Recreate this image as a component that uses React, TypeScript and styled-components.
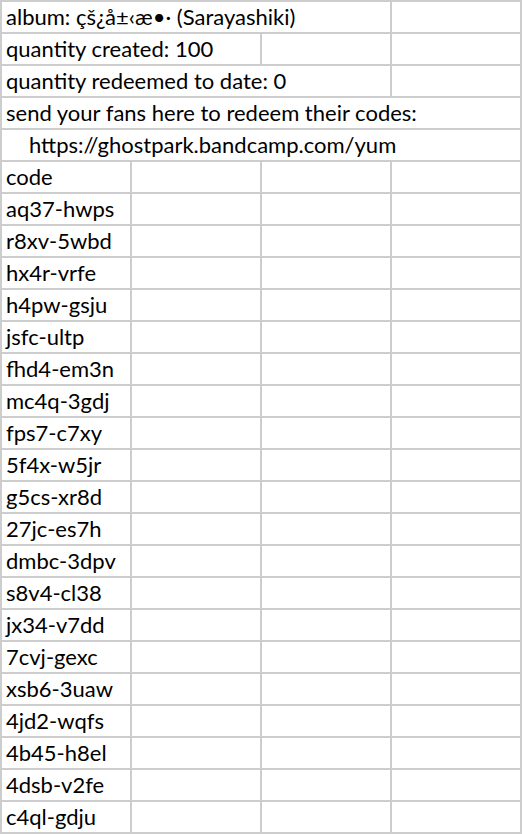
import React from "react";
import styled, { createGlobalStyle } from "styled-components";

const GlobalStyle = createGlobalStyle`
  html, body {
    margin: 0;
    padding: 0;
    background: #ffffff;
  }
`;

const Sheet = styled.div`
  display: grid;
  grid-template-columns: repeat(4, 128px);
  grid-auto-rows: 30px;
  gap: 2px;
  padding: 2px;
  width: 522px;
  box-sizing: border-box;
  background-color: #cdcdcd;
  font-family: Lato, "Liberation Sans", sans-serif;
  font-size: 22px;
  color: #000000;
`;

const Cell = styled.div<{ $span?: number; $indent?: number }>`
  grid-column: span ${(p) => p.$span || 1};
  display: flex;
  align-items: flex-end;
  background-color: #ffffff;
  padding: 0 0 2px ${(p) => 4 + (p.$indent || 0)}px;
  line-height: 26px;
  white-space: nowrap;
  overflow: hidden;
`;

const codes = [
  "aq37-hwps",
  "r8xv-5wbd",
  "hx4r-vrfe",
  "h4pw-gsju",
  "jsfc-ultp",
  "fhd4-em3n",
  "mc4q-3gdj",
  "fps7-c7xy",
  "5f4x-w5jr",
  "g5cs-xr8d",
  "27jc-es7h",
  "dmbc-3dpv",
  "s8v4-cl38",
  "jx34-v7dd",
  "7cvj-gexc",
  "xsb6-3uaw",
  "4jd2-wqfs",
  "4b45-h8el",
  "4dsb-v2fe",
  "c4ql-gdju",
];

const App = () => {
  return (
    <>
      <GlobalStyle />
      <Sheet>
        <Cell $span={3}>album: çš¿å±‹æ•· (Sarayashiki)</Cell>
        <Cell />
        <Cell $span={2}>quantity created: 100</Cell>
        <Cell />
        <Cell />
        <Cell $span={3}>quantity redeemed to date: 0</Cell>
        <Cell />
        <Cell $span={4}>send your fans here to redeem their codes:</Cell>
        <Cell $span={4} $indent={23}>
          https://ghostpark.bandcamp.com/yum
        </Cell>
        <Cell>code</Cell>
        <Cell />
        <Cell />
        <Cell />
        {codes.map((c) => (
          <React.Fragment key={c}>
            <Cell>{c}</Cell>
            <Cell />
            <Cell />
            <Cell />
          </React.Fragment>
        ))}
      </Sheet>
    </>
  );
};

export default App;
